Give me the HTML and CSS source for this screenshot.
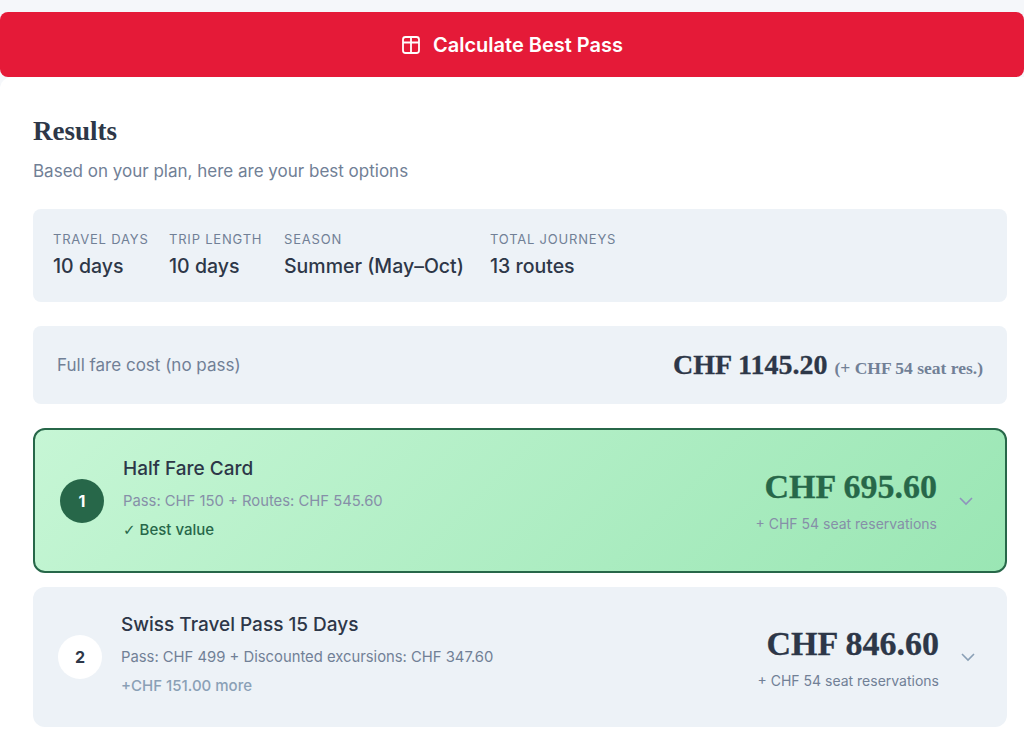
FILE: index.html
```html
<!DOCTYPE html>
<html lang="en">
  <head>
    <meta charset="UTF-8" />
    <meta name="viewport" content="width=device-width, initial-scale=1.0" />
    <link rel="stylesheet" href="styles.css">
    <title>Calculate Best Pass</title>
  </head>
  <body>
    <button class="calcButton">
      <svg class="calcIcon" width="20" height="20" viewBox="0 0 20 20" fill="none" stroke="#fff" stroke-width="1.8">
        <rect x="2" y="2" width="16" height="16" rx="2.5" />
        <path d="M2 7.5h16M10 2v16" />
      </svg>
      <span>Calculate Best Pass</span>
    </button>

    <div class="wrapper">
      <h2 class="resultsTitle">Results</h2>
      <p class="resultsSub">Based on your plan, here are your best options</p>

      <div class="statsBox">
        <div class="stat">
          <div class="statLabel">TRAVEL DAYS</div>
          <div class="statValue">10 days</div>
        </div>
        <div class="stat">
          <div class="statLabel">TRIP LENGTH</div>
          <div class="statValue">10 days</div>
        </div>
        <div class="stat">
          <div class="statLabel">SEASON</div>
          <div class="statValue">Summer (May–Oct)</div>
        </div>
        <div class="stat">
          <div class="statLabel">TOTAL JOURNEYS</div>
          <div class="statValue">13 routes</div>
        </div>
      </div>

      <div class="fullFare">
        <span class="fullFareLabel">Full fare cost (no pass)</span>
        <span class="fullFarePrice">CHF 1145.20 <small>(+ CHF 54 seat res.)</small></span>
      </div>

      <div class="option best">
        <div class="rank">1</div>
        <div class="optionInfo">
          <div class="optionName">Half Fare Card</div>
          <div class="optionDetail">Pass: CHF 150 + Routes: CHF 545.60</div>
          <div class="optionNote"><span class="checkMark">✓</span> Best value</div>
        </div>
        <div class="optionPrice">
          <div class="price">CHF 695.60</div>
          <div class="seatNote">+ CHF 54 seat reservations</div>
        </div>
        <svg class="chevron" width="16" height="16" viewBox="0 0 16 16" fill="none" stroke-width="1.6">
          <path d="M2 5l6 6 6-6" />
        </svg>
      </div>

      <div class="option">
        <div class="rank">2</div>
        <div class="optionInfo">
          <div class="optionName">Swiss Travel Pass 15 Days</div>
          <div class="optionDetail">Pass: CHF 499 + Discounted excursions: CHF 347.60</div>
          <div class="optionNote">+CHF 151.00 more</div>
        </div>
        <div class="optionPrice">
          <div class="price">CHF 846.60</div>
          <div class="seatNote">+ CHF 54 seat reservations</div>
        </div>
        <svg class="chevron" width="16" height="16" viewBox="0 0 16 16" fill="none" stroke-width="1.6">
          <path d="M2 5l6 6 6-6" />
        </svg>
      </div>
    </div>
  </body>
</html>
```

FILE: styles.css
```css
* {
    box-sizing: border-box;
    font-family: 'Inter', 'Liberation Sans', sans-serif;
}

html {
    background: #f5f7fa;
}

body {
    margin: 0;
    padding-top: 12px;
    height: 738px;
    overflow: hidden;
    background: #f5f7fa;
}

.calcButton {
    width: 100%;
    height: 65px;
    display: flex;
    align-items: center;
    justify-content: center;
    gap: 12px;
    border: none;
    border-radius: 8px;
    background: #e51a38;
    color: white;
    font-size: 20px;
    font-weight: 600;
}

.wrapper {
    background: white;
    border-radius: 12px 0 0 0;
    height: 661px;
    padding: 0 17px 0 33px;
    display: flex;
    flex-direction: column;
}

.resultsTitle {
    margin: 40px 0 0;
    height: 28px;
    line-height: 28px;
    font-family: 'Liberation Serif', serif;
    font-size: 27px;
    font-weight: 700;
    color: #2d3748;
}

.resultsSub {
    margin: 15px 0 0;
    height: 22px;
    line-height: 22px;
    font-size: 17px;
    color: #718096;
}

.statsBox {
    margin-top: 27px;
    height: 93px;
    background: #edf2f7;
    border-radius: 8px;
    padding: 0 20px;
    display: grid;
    grid-template-columns: 96px 95px 186px auto;
    align-items: center;
    gap: 20px;
}

.statLabel {
    font-size: 13px;
    letter-spacing: 0.8px;
    color: #718096;
    margin-bottom: 7px;
    white-space: nowrap;
}

.statValue {
    font-size: 19.5px;
    font-weight: 500;
    color: #2d3748;
    white-space: nowrap;
}

.stat {
    margin-top: -3px;
}

.fullFare {
    margin-top: 24px;
    height: 78px;
    background: #edf2f7;
    border-radius: 8px;
    padding: 0 24px;
    display: flex;
    align-items: center;
    justify-content: space-between;
}

.fullFareLabel {
    font-size: 17px;
    color: #718096;
}

.fullFarePrice {
    font-family: 'Liberation Serif', serif;
    font-size: 28px;
    font-weight: 700;
    color: #2d3748;
    -webkit-text-stroke: 0.3px #2d3748;
}

.fullFarePrice small {
    font-family: 'Liberation Serif', serif;
    font-size: 17.5px;
    color: #718096;
    -webkit-text-stroke: 0;
}

.option {
    margin-top: 14px;
    height: 140px;
    background: #edf2f7;
    border-radius: 12px;
    padding: 0 31px 0 25px;
    display: flex;
    align-items: center;
}

.option.best {
    margin-top: 24px;
    height: 145px;
    border: 2px solid #276749;
    background: linear-gradient(135deg, #c6f6d5, #9ae6b4);
}

.rank {
    width: 44px;
    height: 44px;
    border-radius: 50%;
    background: white;
    color: #2d3748;
    display: grid;
    place-items: center;
    font-size: 16px;
    font-weight: 700;
    margin-right: 19px;
}

.best .rank {
    background: #276749;
    color: white;
}

.optionInfo {
    flex: 1;
}

.optionName {
    font-size: 19px;
    font-weight: 500;
    color: #2d3748;
    margin-bottom: 12px;
    margin-top: -6px;
}

.optionDetail {
    font-size: 14.8px;
    color: #718096;
    margin-bottom: 10px;
}

.best .optionDetail,
.best .seatNote {
    color: #868fa8;
}

.optionNote {
    font-size: 15px;
    font-weight: 500;
    color: #8aa0b6;
}

.best .optionNote {
    color: #276749;
}

.checkMark {
    font-family: 'DejaVu Sans', sans-serif;
    font-size: 15px;
}

.optionPrice {
    text-align: right;
}

.price {
    font-family: 'Liberation Serif', serif;
    font-size: 34px;
    line-height: 40px;
    font-weight: 700;
    color: #2d3748;
    -webkit-text-stroke: 0.3px #2d3748;
    margin-top: -2px;
    margin-bottom: 8px;
}

.best .price {
    color: #276749;
    -webkit-text-stroke: 0.3px #276749;
}

.seatNote {
    font-size: 14px;
    color: #718096;
}

.chevron {
    margin-left: 21px;
    stroke: #8aa0b6;
}

.best .chevron {
    stroke: #8f93bd;
}
```
